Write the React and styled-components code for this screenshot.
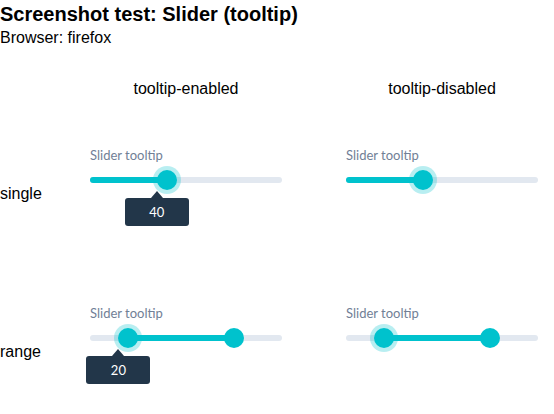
import React from "react";
import styled, { createGlobalStyle, css } from "styled-components";

const GlobalStyle = createGlobalStyle`
  html, body { margin: 0; padding: 0; background: #fff; }
  body {
    font-family: "Liberation Sans", Arial, sans-serif;
    color: #000;
  }
`;

const TEAL = "#00c2cd";

const Title = styled.h1`
  margin: 0;
  padding-top: 3px;
  padding-bottom: 3px;
  font-size: 20px;
  line-height: 23px;
  font-weight: bold;
`;

const Subtitle = styled.p`
  margin: 0;
  font-size: 16px;
  line-height: 18px;
`;

const Grid = styled.div`
  display: grid;
  grid-template-columns: 26px 192px 192px;
  grid-template-rows: 34px 158px 158px;
  column-gap: 64px;
  margin-top: 33px;
`;

const ColHeader = styled.div`
  font-size: 16px;
  line-height: 18px;
  text-align: center;
  white-space: nowrap;
`;

const RowLabel = styled.div`
  font-size: 16px;
  line-height: 18px;
  padding-top: 2px;
  align-self: center;
  white-space: nowrap;
`;

const Cell = styled.div`
  padding-top: 33px;
`;

const FieldLabel = styled.div`
  font-family: Lato, "Noto Sans", sans-serif;
  font-size: 13px;
  line-height: 16px;
  color: #718096;
`;

const Root = styled.div`
  position: relative;
  height: 20px;
  margin-top: 7px;
  display: flex;
  align-items: center;
`;

const Track = styled.div`
  position: relative;
  width: 100%;
  height: 6px;
  border-radius: 3px;
  background: #e2e8f0;
`;

const Range = styled.div`
  position: absolute;
  top: 0;
  bottom: 0;
  border-radius: 3px;
  background: ${TEAL};
`;

const Thumb = styled.div`
  position: absolute;
  top: 50%;
  width: 20px;
  height: 20px;
  border-radius: 50%;
  background: ${TEAL};
  transform: translate(-50%, -50%);
  ${(p) =>
    p.$focused &&
    css`
      box-shadow: 0 0 0 4px rgba(0, 194, 205, 0.28);
    `}
`;

const Tooltip = styled.div`
  position: absolute;
  top: 28px;
  width: 64px;
  height: 28px;
  margin-left: -42px;
  border-radius: 3px;
  background: #223649;
  color: #fff;
  font-family: Lato, "Noto Sans", sans-serif;
  font-size: 13px;
  display: flex;
  align-items: center;
  justify-content: center;

  &::before {
    content: "";
    position: absolute;
    left: 50%;
    top: -7px;
    margin-left: -6px;
    border-left: 6px solid transparent;
    border-right: 6px solid transparent;
    border-bottom: 7px solid #223649;
  }
`;

function Slider({ values, tooltip }) {
  const lo = values.length > 1 ? values[0] : 0;
  const hi = values.length > 1 ? values[1] : values[0];
  return (
    <Cell>
      <FieldLabel>Slider tooltip</FieldLabel>
      <Root>
        <Track>
          <Range style={{ left: `${lo}%`, width: `${hi - lo}%` }} />
        </Track>
        {values.map((v, i) => (
          <Thumb key={i} $focused={i === 0} style={{ left: `${v}%` }} />
        ))}
        {tooltip && (
          <Tooltip style={{ left: `${values[0]}%` }}>{values[0]}</Tooltip>
        )}
      </Root>
    </Cell>
  );
}

export default function App() {
  return (
    <>
      <GlobalStyle />
      <Title>Screenshot test: Slider (tooltip)</Title>
      <Subtitle>Browser: firefox</Subtitle>
      <Grid>
        <div />
        <ColHeader>tooltip-enabled</ColHeader>
        <ColHeader>tooltip-disabled</ColHeader>

        <RowLabel>single</RowLabel>
        <Slider values={[40]} tooltip />
        <Slider values={[40]} />

        <RowLabel>range</RowLabel>
        <Slider values={[20, 75]} tooltip />
        <Slider values={[20, 75]} />
      </Grid>
    </>
  );
}
